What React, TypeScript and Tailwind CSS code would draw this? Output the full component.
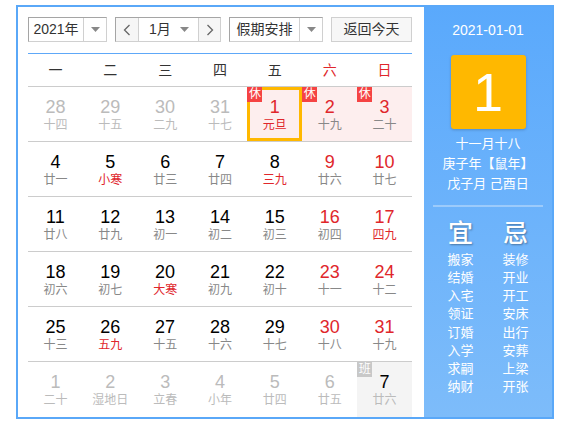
import React from "react";

type Cell = {
  d: string;
  l: string;
  other?: boolean;
  redNum?: boolean;
  redLunar?: boolean;
  rest?: boolean;
  work?: boolean;
  sel?: boolean;
};

const rows: Cell[][] = [
  [
    { d: "28", l: "十四", other: true },
    { d: "29", l: "十五", other: true },
    { d: "30", l: "二九", other: true },
    { d: "31", l: "十七", other: true },
    { d: "1", l: "元旦", redNum: true, redLunar: true, rest: true, sel: true },
    { d: "2", l: "十九", redNum: true, rest: true },
    { d: "3", l: "二十", redNum: true, rest: true },
  ],
  [
    { d: "4", l: "廿一" },
    { d: "5", l: "小寒", redLunar: true },
    { d: "6", l: "廿三" },
    { d: "7", l: "廿四" },
    { d: "8", l: "三九", redLunar: true },
    { d: "9", l: "廿六", redNum: true },
    { d: "10", l: "廿七", redNum: true },
  ],
  [
    { d: "11", l: "廿八" },
    { d: "12", l: "廿九" },
    { d: "13", l: "初一" },
    { d: "14", l: "初二" },
    { d: "15", l: "初三" },
    { d: "16", l: "初四", redNum: true },
    { d: "17", l: "四九", redNum: true, redLunar: true },
  ],
  [
    { d: "18", l: "初六" },
    { d: "19", l: "初七" },
    { d: "20", l: "大寒", redLunar: true },
    { d: "21", l: "初九" },
    { d: "22", l: "初十" },
    { d: "23", l: "十一", redNum: true },
    { d: "24", l: "十二", redNum: true },
  ],
  [
    { d: "25", l: "十三" },
    { d: "26", l: "五九", redLunar: true },
    { d: "27", l: "十五" },
    { d: "28", l: "十六" },
    { d: "29", l: "十七" },
    { d: "30", l: "十八", redNum: true },
    { d: "31", l: "十九", redNum: true },
  ],
  [
    { d: "1", l: "二十", other: true },
    { d: "2", l: "湿地日", other: true },
    { d: "3", l: "立春", other: true },
    { d: "4", l: "小年", other: true },
    { d: "5", l: "廿四", other: true },
    { d: "6", l: "廿五", other: true },
    { d: "7", l: "廿六", work: true },
  ],
];

const yi = ["搬家", "结婚", "入宅", "领证", "订婚", "入学", "求嗣", "纳财"];
const ji = ["装修", "开业", "开工", "安床", "出行", "安葬", "上梁", "开张"];

function Tri() {
  return (
    <svg width="9" height="5" viewBox="0 0 9 5">
      <path d="M0 0 L9 0 L4.5 5 Z" fill="#888" />
    </svg>
  );
}

function Chev({ dir }: { dir: "l" | "r" }) {
  return (
    <svg width="8" height="12" viewBox="0 0 8 12">
      <path
        d={dir === "l" ? "M6.5 1 L1.5 6 L6.5 11" : "M1.5 1 L6.5 6 L1.5 11"}
        stroke="#666"
        strokeWidth="1.3"
        fill="none"
      />
    </svg>
  );
}

const box =
  "h-[25px] flex border border-t-[#a5a5a5] border-l-[#a5a5a5] border-r-[#d0d0d0] border-b-[#d0d0d0] bg-white";

export default function App() {
  return (
    <div className="pt-[5px] pl-[16px] font-['Liberation_Sans','Noto_Sans_CJK_SC',sans-serif] text-[#333]">
      <div className="w-[538px] h-[414px] border-2 border-[#5aa8f8] flex">
        <div className="w-[406px] pl-[10px] pr-[12px] pt-[10px] flex flex-col">
          <div className="flex gap-[8px] text-[14px]">
            <div className={box + " w-[79px]"}>
              <div className="w-[54px] flex items-center justify-center">2021年</div>
              <div className="flex-1 border-l border-[#d0d0d0] flex items-center justify-center">
                <Tri />
              </div>
            </div>
            <div className={box + " w-[106px]"}>
              <div className="w-[22px] bg-[#f6f6f6] flex items-center justify-center">
                <Chev dir="l" />
              </div>
              <div className="w-[61px] border-l border-r border-[#d0d0d0] flex items-center justify-between pl-[10px] pr-[9px]">
                <span>1月</span>
                <Tri />
              </div>
              <div className="flex-1 bg-[#f6f6f6] flex items-center justify-center">
                <Chev dir="r" />
              </div>
            </div>
            <div className={box + " w-[94px]"}>
              <div className="w-[69px] flex items-center justify-center">假期安排</div>
              <div className="flex-1 border-l border-[#d0d0d0] flex items-center justify-center">
                <Tri />
              </div>
            </div>
            <div className="h-[25px] flex-1 border border-[#d0d0d0] bg-[#f7f7f7] flex items-center justify-center">
              返回今天
            </div>
          </div>
          <div className="mt-[11px] h-px bg-[#5ea8f8]" />
          <div className="grid grid-cols-7 h-[33px] border-b border-[#cccccc] text-[14px]">
            {["一", "二", "三", "四", "五", "六", "日"].map((w, i) => (
              <div
                key={w}
                className={
                  "flex items-center justify-center " + (i >= 5 ? "text-[#e0262b]" : "text-[#333]")
                }
              >
                {w}
              </div>
            ))}
          </div>
          {rows.map((r, ri) => (
            <div
              key={ri}
              className={
                "grid grid-cols-7 " +
                (ri < rows.length - 1 ? "h-[55px] border-b border-[#cccccc]" : "h-[55px]")
              }
            >
              {r.map((c, ci) => {
                const numColor = c.other
                  ? "text-[#bbbbbb]"
                  : c.redNum
                  ? "text-[#e0262b]"
                  : "text-black";
                const lunColor =
                  c.other || c.work
                    ? "text-[#bbbbbb]"
                    : c.redLunar
                    ? "text-[#e0262b]"
                    : "text-[#888888]";
                const bg = c.rest ? "bg-[#fdeeee]" : c.work ? "bg-[#f4f4f4]" : "";
                return (
                  <div key={ci} className={"relative flex flex-col items-center pt-[10px] " + bg}>
                    <div className={"text-[18px] leading-[20px] " + numColor}>{c.d}</div>
                    <div className={"text-[12px] leading-[16px] " + lunColor}>{c.l}</div>
                    {c.sel && (
                      <div className="absolute inset-0 border-[3px] border-[#ffb800]" />
                    )}
                    {c.rest && (
                      <div className="absolute top-0 left-0 w-[15px] h-[15px] bg-[#f54343] text-white text-[12px] leading-[15px] text-center">
                        休
                      </div>
                    )}
                    {c.work && (
                      <div className="absolute top-0 left-0 w-[15px] h-[15px] bg-[#c8c8c8] text-white text-[12px] leading-[15px] text-center">
                        班
                      </div>
                    )}
                  </div>
                );
              })}
            </div>
          ))}
        </div>
        <div className="flex-1 bg-gradient-to-b from-[#5aa9fc] to-[#7dbcfa] flex flex-col items-center pt-[13px] text-white">
          <div className="text-[14px] leading-[20px]">2021-01-01</div>
          <div className="mt-[15px] w-[75px] h-[74px] rounded-[3px] bg-[#ffb800] shadow-[0_1px_3px_rgba(0,0,0,0.2)] flex items-center justify-center text-[54px] leading-none">
            1
          </div>
          <div className="mt-[5px] text-[13px] leading-[20px] text-center">
            <div>十一月十八</div>
            <div>庚子年【鼠年】</div>
            <div>戊子月 己酉日</div>
          </div>
          <div className="mt-[11px] w-[110px] h-[2px] bg-[#9ccbfb]" />
          <div className="mt-[12px] w-[110px] grid grid-cols-2">
            <div className="flex flex-col items-center">
              <div className="text-[25px] leading-[28px] font-medium [text-shadow:1px_1px_2px_rgba(0,0,0,0.35)]">宜</div>
              <div className="mt-[4px] text-[13px] leading-[18.15px] text-center">
                {yi.map((t) => (
                  <div key={t}>{t}</div>
                ))}
              </div>
            </div>
            <div className="flex flex-col items-center">
              <div className="text-[25px] leading-[28px] font-medium [text-shadow:1px_1px_2px_rgba(0,0,0,0.35)]">忌</div>
              <div className="mt-[4px] text-[13px] leading-[18.15px] text-center">
                {ji.map((t) => (
                  <div key={t}>{t}</div>
                ))}
              </div>
            </div>
          </div>
        </div>
      </div>
    </div>
  );
}
